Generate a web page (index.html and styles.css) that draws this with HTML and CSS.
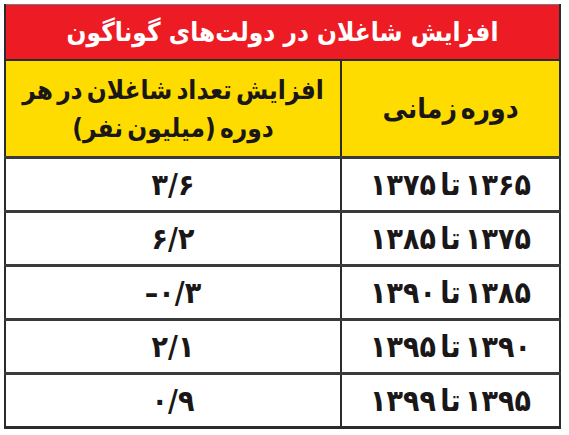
FILE: index.html
```html
<!DOCTYPE html>
<html lang="fa">
<head>
<meta charset="utf-8">
<link rel="stylesheet" href="styles.css">
</head>
<body>
<div class="wrap">
<table class="tbl" dir="rtl">
<colgroup>
<col class="col-period">
<col class="col-val">
</colgroup>
<thead>
<tr><th colspan="2" class="title">افزایش شاغلان در دولت‌های گوناگون</th></tr>
<tr class="head">
<th class="c-period">دوره زمانی</th>
<th class="c-val">افزایش تعداد شاغلان در هر<br>دوره (میلیون نفر)</th>
</tr>
</thead>
<tbody>
<tr><td class="c-period">۱۳۶۵ تا ۱۳۷۵</td><td class="c-val"><span class="num">۳/۶</span></td></tr>
<tr><td class="c-period">۱۳۷۵ تا ۱۳۸۵</td><td class="c-val"><span class="num">۶/۲</span></td></tr>
<tr><td class="c-period">۱۳۸۵ تا ۱۳۹۰</td><td class="c-val"><span class="num">–۰/۳</span></td></tr>
<tr><td class="c-period">۱۳۹۰ تا ۱۳۹۵</td><td class="c-val"><span class="num">۲/۱</span></td></tr>
<tr><td class="c-period">۱۳۹۵ تا ۱۳۹۹</td><td class="c-val"><span class="num">۰/۹</span></td></tr>
</tbody>
</table>
</div>
</body>
</html>
```
FILE: styles.css
```css
html, body {
  margin: 0;
  padding: 0;
  background: #ffffff;
}
.wrap {
  padding: 4px 0 0 4px;
  width: 557px;
}
.tbl {
  width: 557px;
  border-collapse: collapse;
  table-layout: fixed;
  font-family: "DejaVu Sans Condensed", "DejaVu Sans", sans-serif;
  font-weight: bold;
  color: #1a1718;
  border-top: 1px solid #7a7a7a;
  border-left: 2px solid #2b2b2b;
  border-right: 2px solid #2b2b2b;
  border-bottom: 3px solid #2b2b2b;
}
.col-period {
  width: 219px;
}
.tbl th, .tbl td {
  padding: 0;
  text-align: center;
  vertical-align: middle;
  white-space: nowrap;
}
.title {
  background: #ed1c24;
  color: #ffffff;
  height: 54px;
  font-size: 26px;
  line-height: 30px;
  border-bottom: 2px solid #2b2b2b;
}
.head th {
  background: #ffdc00;
  height: 95px;
  font-size: 26px;
  line-height: 38px;
  word-spacing: -4px;
}
.head .c-period {
  font-size: 28px;
  word-spacing: -5px;
}
.c-period {
  border-left: 2px solid #2b2b2b;
}
.tbl td {
  height: 51px;
  font-size: 30px;
  line-height: 32px;
  border-top: 3px solid #3a3a3a;
  word-spacing: -5px;
}
.num {
  direction: ltr;
  unicode-bidi: isolate;
  display: inline-block;
}
```
